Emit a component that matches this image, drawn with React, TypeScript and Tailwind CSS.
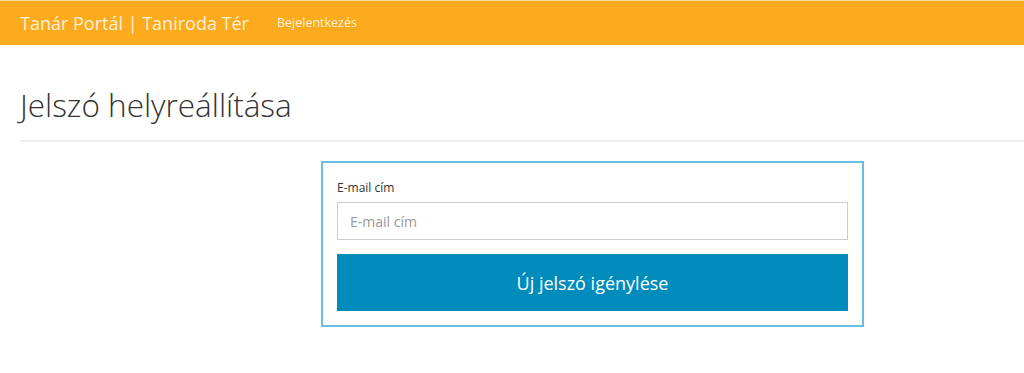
import React from "react";

const font = { fontFamily: '"Open Sans", "Noto Sans", sans-serif' };

const Header = () => {
  return (
    <div className="h-[45px] bg-[#fcaa1e] border-t border-[#f7d9a4] flex items-center">
      <a className="pl-5 text-[18px] text-[#fff0d6] font-normal leading-none">
        Tanár Portál | Taniroda Tér
      </a>
      <a className="ml-[28px] text-[12.5px] text-[#fff0d6] leading-none">Bejelentkezés</a>
    </div>
  );
};

const App = () => {
  return (
    <div className="min-h-[373px] bg-white text-[#333]" style={font}>
      <Header />
      <div className="pl-5">
        <h1 className="pt-[40px] text-[31.5px] font-light leading-[40px] text-[#333]">
          Jelszó helyreállítása
        </h1>
        <hr className="mt-[15px] border-t-2 border-[#eeeeee]" />
      </div>
      <div className="pl-[321px] pt-[19px]">
        <div className="w-[543px] border-2 border-[#66bfe3] px-[14px] pt-[17px] pb-[14px]">
          <label className="block text-[12px] text-[#333] leading-[16px] mb-[6px]">E-mail cím</label>
          <input
            type="text"
            placeholder="E-mail cím"
            className="w-full h-[38px] border border-[#cccccc] px-3 text-[14px] text-[#333] placeholder:text-[#999] outline-none"
          />
          <button className="mt-[14px] w-full h-[57px] bg-[#008cba] text-white text-[18px] leading-none">
            Új jelszó igénylése
          </button>
        </div>
      </div>
    </div>
  );
};

export default App;
